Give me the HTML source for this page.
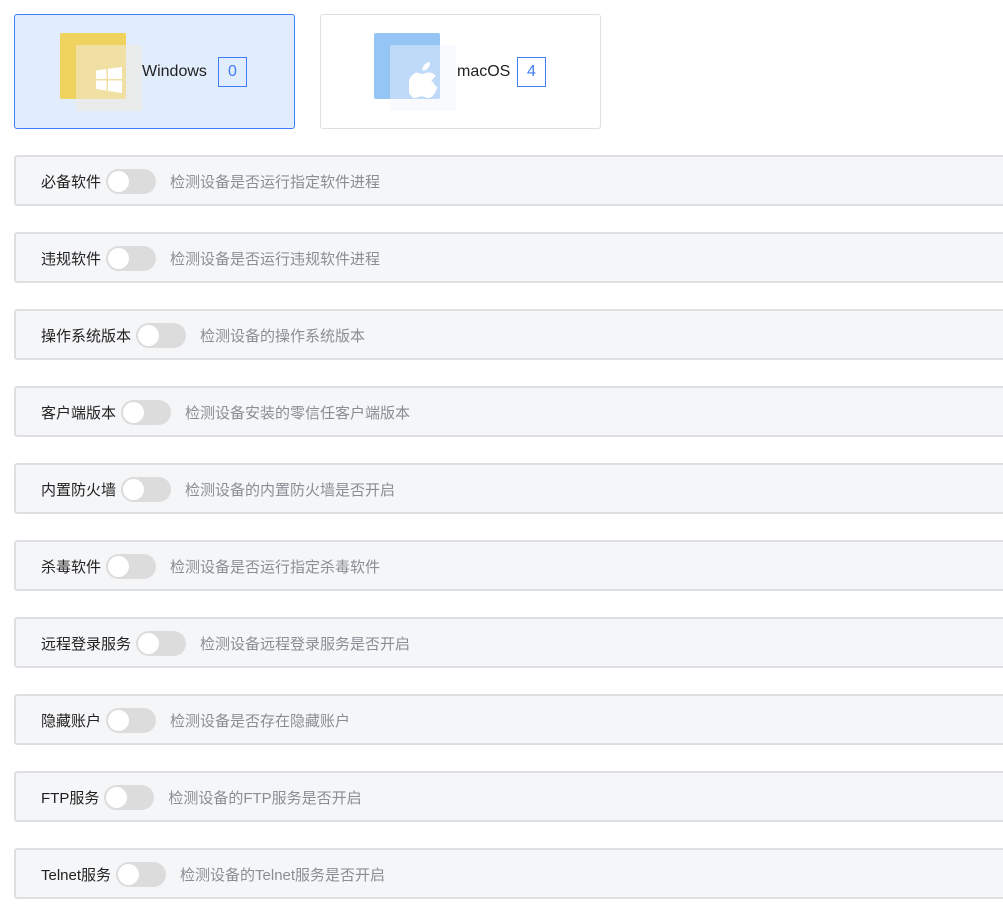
<!DOCTYPE html>
<html><head><meta charset="utf-8"><style>
body{margin:0;background:#fff;font-family:"Liberation Sans","Noto Sans CJK SC",sans-serif;width:1003px;height:914px;overflow:hidden;position:relative}
.card{position:absolute;top:14px;width:279px;height:113px;border:1px solid #dcdfe6;border-radius:3px;background:#fff;box-sizing:content-box}
.card.sel{background:#e1edfd;border-color:#3f7ef5}
.bk{position:absolute;left:45px;top:18px;width:66px;height:66px;border-radius:2px}
.fr{position:absolute;left:61px;top:30px;width:66px;height:66px;background:rgba(255,255,255,.4);border-radius:2px}
.nm{position:absolute;top:48px;font-size:16px;color:#222}
.bd{position:absolute;top:42px;width:29px;height:30px;border:1px solid #3f7ef5;color:#3f7ef5;font-size:16px;text-align:center;line-height:28px;box-sizing:border-box}
.row{position:absolute;left:14px;width:1000px;height:51px;border:2px solid #dedfe2;border-radius:3px;background:#f5f6f8;box-sizing:border-box;display:flex;align-items:center;padding-left:25px;padding-top:2px;font-size:15px}
.lb{color:#222}
.tg{width:50px;height:25px;border-radius:13px;background:#dcdcdc;position:relative;margin-left:5px;margin-right:14px}
.tg:after{content:"";position:absolute;left:2px;top:2px;width:21px;height:21px;border-radius:50%;background:#fff}
.ds{color:#8a8d94}
</style></head><body>
<div class="card sel" style="left:14px">
<div class="bk" style="background:#efd35e"></div>
<div class="fr" style="background:rgba(240,235,220,.55)"><svg style="position:absolute;left:20px;top:22px" width="26" height="26" viewBox="0 0 26 26"><path fill="#fff" d="M0 3.5L10.5 2v10H0zM12 1.8L26 0v12H12zM0 13.5h10.5v10L0 22zM12 13.5h14V26l-14-2z"/></svg></div>
<div class="nm" style="left:127px">Windows</div>
<div class="bd" style="left:203px">0</div>
</div>
<div class="card" style="left:320px">
<div class="bk" style="left:53px;background:#95c5f5"></div>
<div class="fr" style="left:69px;background:rgba(240,245,252,.45)"><svg style="position:absolute;left:19px;top:17px" width="30" height="36" viewBox="0 0 30 36"><path fill="#fff" d="M21 0c.3 2.4-.7 4.700-2.100 6.200-1.400 1.500-3.600 2.600-5.500 2.400-.3-2.300.8-4.700 2.100-6.100C17 1 19.300.1 21 0zM24.500 19c0 4.600 4 6.200 4 6.200s-.9 3.300-3.100 6.400C23.600 34.300 21.700 36 19 36c-2.700 0-3.600-1.600-6.600-1.600S8.600 36 6.100 36C3.500 36 1.500 33.400 0 30.700-2.700 24.900-1 14.200 6.800 10.800c2.400-.6 4.500 1.200 6.100 1.200 1.600 0 3.900-1.800 7-1.500 1.300.1 4.700.5 7 3.700-.2.1-4.400 2.400-4.400 7.200z"/></svg></div>
<div class="nm" style="left:136px">macOS</div>
<div class="bd" style="left:196px">4</div>
</div>
<div class="row" style="top:155px"><span class="lb">必备软件</span><span class="tg"></span><span class="ds">检测设备是否运行指定软件进程</span></div>
<div class="row" style="top:232px"><span class="lb">违规软件</span><span class="tg"></span><span class="ds">检测设备是否运行违规软件进程</span></div>
<div class="row" style="top:309px"><span class="lb">操作系统版本</span><span class="tg"></span><span class="ds">检测设备的操作系统版本</span></div>
<div class="row" style="top:386px"><span class="lb">客户端版本</span><span class="tg"></span><span class="ds">检测设备安装的零信任客户端版本</span></div>
<div class="row" style="top:463px"><span class="lb">内置防火墙</span><span class="tg"></span><span class="ds">检测设备的内置防火墙是否开启</span></div>
<div class="row" style="top:540px"><span class="lb">杀毒软件</span><span class="tg"></span><span class="ds">检测设备是否运行指定杀毒软件</span></div>
<div class="row" style="top:617px"><span class="lb">远程登录服务</span><span class="tg"></span><span class="ds">检测设备远程登录服务是否开启</span></div>
<div class="row" style="top:694px"><span class="lb">隐藏账户</span><span class="tg"></span><span class="ds">检测设备是否存在隐藏账户</span></div>
<div class="row" style="top:771px"><span class="lb">FTP服务</span><span class="tg"></span><span class="ds">检测设备的FTP服务是否开启</span></div>
<div class="row" style="top:848px"><span class="lb">Telnet服务</span><span class="tg"></span><span class="ds">检测设备的Telnet服务是否开启</span></div>
</body></html>
